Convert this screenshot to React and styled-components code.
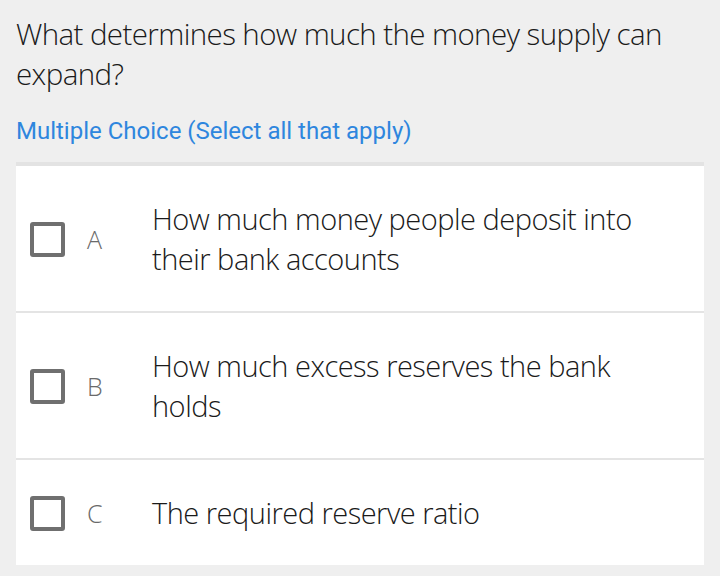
import React from "react";
import styled, { createGlobalStyle } from "styled-components";

const GlobalStyle = createGlobalStyle`
  html, body {
    margin: 0;
    padding: 0;
    background: #efefef;
  }
  body {
    font-family: "Open Sans", "Noto Sans", sans-serif;
  }
`;

const Page = styled.div`
  width: 720px;
  min-height: 576px;
  padding: 14px 16px 0;
  box-sizing: border-box;
  background: #efefef;
`;

const Question = styled.h1`
  margin: 0;
  font-family: "Open Sans", sans-serif;
  font-weight: 300;
  font-size: 29.5px;
  line-height: 40px;
  color: #1a1a1a;
  letter-spacing: -0.6px;
`;

const Hint = styled.div`
  margin-top: 23px;
  font-family: Roboto, sans-serif;
  font-size: 24px;
  line-height: 28px;
  color: #2e86de;
`;

const OptionList = styled.ul`
  list-style: none;
  margin: 17px 0 0;
  padding: 0;
  background: #fff;
  border-top: 4px solid #e3e3e3;
`;

const Option = styled.li`
  display: flex;
  align-items: center;
  padding: 33px 41px 32px 14px;
  border-top: ${({ first }) => (first ? "none" : "2px solid #e4e4e4")};
`;

const Box = styled.span`
  flex: none;
  width: 35px;
  height: 35px;
  box-sizing: border-box;
  border: 4px solid #6f6f6f;
  border-radius: 3px;
`;

const Letter = styled.span`
  flex: none;
  width: 64px;
  padding-left: 22px;
  box-sizing: border-box;
  font-family: "Open Sans", sans-serif;
  font-weight: 300;
  font-size: 25px;
  color: #6a6a6a;
`;

const Label = styled.span`
  padding-left: 23px;
  font-family: "Open Sans", sans-serif;
  font-weight: 300;
  font-size: 29px;
  line-height: 40px;
  color: #1a1a1a;
  letter-spacing: -0.5px;
`;

const options = [
  { key: "A", text: "How much money people deposit into their bank accounts" },
  { key: "B", text: "How much excess reserves the bank holds" },
  { key: "C", text: "The required reserve ratio" },
];

export default function App() {
  return (
    <Page>
      <GlobalStyle />
      <Question>What determines how much the money supply can expand?</Question>
      <Hint>Multiple Choice (Select all that apply)</Hint>
      <OptionList>
        {options.map((o, i) => (
          <Option key={o.key} first={i === 0}>
            <Box />
            <Letter>{o.key}</Letter>
            <Label>{o.text}</Label>
          </Option>
        ))}
      </OptionList>
    </Page>
  );
}
